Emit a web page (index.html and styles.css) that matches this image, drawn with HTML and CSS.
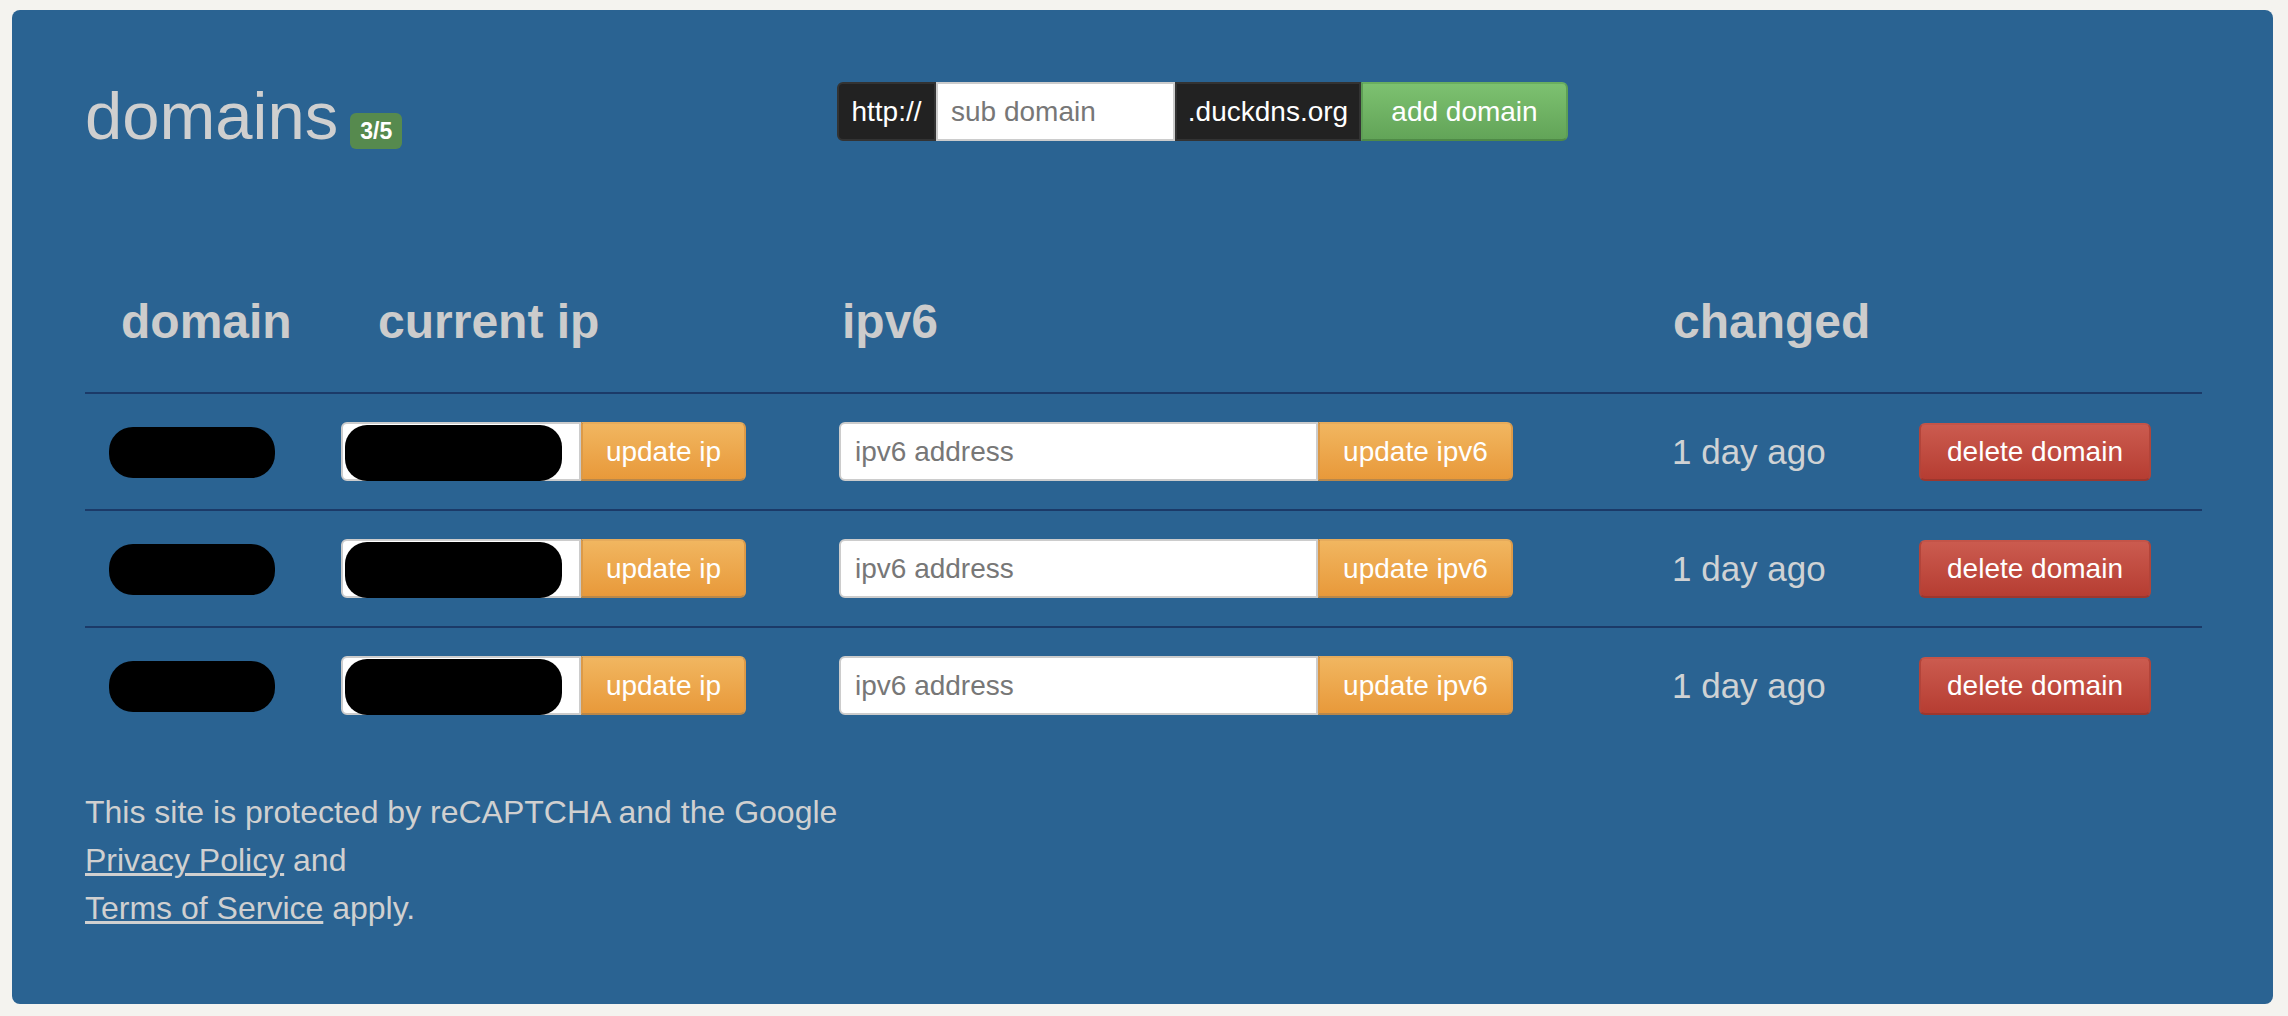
FILE: index.html
```html
<!DOCTYPE html>
<html lang="en">
<head>
<meta charset="utf-8">
<title>Duck DNS - domains</title>
<link rel="stylesheet" href="styles.css">
</head>
<body>
<div class="panel">
  <header class="top">
    <h1 class="title">domains<span class="badge">3/5</span></h1>
    <form class="add-form">
      <span class="addon addon-http">http://</span>
      <input class="field field-sub" type="text" placeholder="sub domain">
      <span class="addon addon-duck">.duckdns.org</span>
      <button class="btn btn-green btn-add" type="button">add domain</button>
    </form>
  </header>

  <table class="domains">
    <colgroup>
      <col class="c-domain">
      <col class="c-ip">
      <col class="c-ipv6">
      <col class="c-changed">
      <col class="c-action">
    </colgroup>
    <thead>
      <tr>
        <th class="h-domain">domain</th>
        <th class="h-ip">current ip</th>
        <th class="h-ipv6">ipv6</th>
        <th class="h-changed">changed</th>
        <th></th>
      </tr>
    </thead>
    <tbody>
      <tr>
        <td><span class="redact redact-domain"></span></td>
        <td>
          <div class="group">
            <div class="field field-ip"><span class="redact redact-ip"></span></div>
            <button class="btn btn-orange btn-ip" type="button">update ip</button>
          </div>
        </td>
        <td>
          <div class="group">
            <input class="field field-v6" type="text" placeholder="ipv6 address">
            <button class="btn btn-orange btn-v6" type="button">update ipv6</button>
          </div>
        </td>
        <td class="changed">1 day ago</td>
        <td><button class="btn btn-red btn-del" type="button">delete domain</button></td>
      </tr>
      <tr>
        <td><span class="redact redact-domain"></span></td>
        <td>
          <div class="group">
            <div class="field field-ip"><span class="redact redact-ip"></span></div>
            <button class="btn btn-orange btn-ip" type="button">update ip</button>
          </div>
        </td>
        <td>
          <div class="group">
            <input class="field field-v6" type="text" placeholder="ipv6 address">
            <button class="btn btn-orange btn-v6" type="button">update ipv6</button>
          </div>
        </td>
        <td class="changed">1 day ago</td>
        <td><button class="btn btn-red btn-del" type="button">delete domain</button></td>
      </tr>
      <tr>
        <td><span class="redact redact-domain"></span></td>
        <td>
          <div class="group">
            <div class="field field-ip"><span class="redact redact-ip"></span></div>
            <button class="btn btn-orange btn-ip" type="button">update ip</button>
          </div>
        </td>
        <td>
          <div class="group">
            <input class="field field-v6" type="text" placeholder="ipv6 address">
            <button class="btn btn-orange btn-v6" type="button">update ipv6</button>
          </div>
        </td>
        <td class="changed">1 day ago</td>
        <td><button class="btn btn-red btn-del" type="button">delete domain</button></td>
      </tr>
    </tbody>
  </table>

  <p class="legal">This site is protected by reCAPTCHA and the Google<br>
    <a href="#">Privacy Policy</a> and<br>
    <a href="#">Terms of Service</a> apply.</p>
</div>
</body>
</html>
```

FILE: styles.css
```css
html, body {
  margin: 0;
}

body {
  background: #f4f3ef;
  padding: 10px 15px 12px 12px;
  font-family: "Liberation Sans", Arial, Helvetica, sans-serif;
}

.panel {
  background: #2a6392;
  border-radius: 8px;
  padding: 69px 71px 72px 73px;
  color: #cfcfcf;
}

/* ---------- top bar ---------- */
.top {
  display: flex;
  align-items: flex-start;
}

.title {
  flex: 0 0 752px;
  margin: 0;
  font-size: 67px;
  line-height: 74px;
  font-weight: normal;
  color: #cfcfcf;
}

.badge {
  display: inline-block;
  margin-left: 12px;
  padding: 7px 10px;
  font-size: 23px;
  line-height: 22px;
  font-weight: bold;
  color: #ffffff;
  background: #568a4e;
  border-radius: 6px;
  vertical-align: baseline;
}

.add-form {
  display: flex;
  height: 59px;
  margin: 3px 0 0;
}

.addon {
  box-sizing: border-box;
  display: flex;
  align-items: center;
  justify-content: center;
  background: #222222;
  border: 2px solid #333333;
  color: #ffffff;
  font-size: 28px;
}

.addon-http {
  width: 99px;
  border-radius: 6px 0 0 6px;
}

.addon-duck {
  width: 186px;
  border-radius: 0;
}

/* ---------- fields ---------- */
.field {
  box-sizing: border-box;
  height: 59px;
  margin: 0;
  background: #ffffff;
  border: 2px solid #cccccc;
  font-family: "Liberation Sans", Arial, Helvetica, sans-serif;
  font-size: 28px;
  color: #555555;
  outline: none;
}

.field::placeholder {
  color: #777777;
}

.field-sub {
  width: 239px;
  padding: 0 13px;
  border-radius: 0;
}

.field-ip {
  width: 240px;
  border-radius: 6px 0 0 6px;
  display: flex;
  align-items: center;
  padding: 0 0 0 2px;
}

.field-v6 {
  width: 479px;
  padding: 0 14px;
  border-radius: 6px 0 0 6px;
}

.redact {
  display: block;
  background: #000000;
}

.redact-domain {
  width: 166px;
  height: 51px;
  border-radius: 24px;
  margin-top: 2px;
}

.redact-ip {
  width: 217px;
  height: 56px;
  border-radius: 22px;
  margin-top: 3px;
}

/* ---------- buttons ---------- */
.btn {
  box-sizing: border-box;
  height: 59px;
  margin: 0;
  padding: 0;
  border: 2px solid;
  font-family: "Liberation Sans", Arial, Helvetica, sans-serif;
  font-size: 28px;
  color: #ffffff;
  cursor: pointer;
}

.btn-green {
  width: 207px;
  border-radius: 0 6px 6px 0;
  background: linear-gradient(#7dc170, #62a458);
  border-color: #6aae5f #5e9f55 #4f8a47 #5e9f55;
}

.btn-orange {
  border-radius: 0 6px 6px 0;
  background: linear-gradient(#f1b660, #e8993a);
  border-color: #e6ab5b #dc9a48 #b8874a #dc9a48;
}

.btn-ip {
  width: 165px;
}

.btn-v6 {
  width: 195px;
}

.btn-red {
  width: 232px;
  height: 58px;
  border-radius: 6px;
  background: linear-gradient(#cb5b4f, #b63d32);
  border-color: #c45448 #b2443a #9c372e #b2443a;
}

/* ---------- table ---------- */
.group {
  display: flex;
}

.domains {
  width: 2117px;
  margin-top: 142px;
  table-layout: fixed;
  border-collapse: separate;
  border-spacing: 0;
}

.c-domain { width: 232px; }
.c-ip { width: 498px; }
.c-ipv6 { width: 833px; }
.c-changed { width: 247px; }
.c-action { width: 307px; }

.domains th {
  text-align: left;
  font-size: 48px;
  line-height: 54px;
  font-weight: bold;
  color: #cccccc;
  padding: 0 0 43px 24px;
  white-space: nowrap;
}

.domains th.h-domain { padding-left: 36px; }
.domains th.h-ip { padding-left: 61px; }
.domains th.h-ipv6 { padding-left: 27px; }
.domains th.h-changed { padding-left: 25px; }

.domains td {
  border-top: 2px solid #1b3a68;
  padding: 28px 0 28px 24px;
  vertical-align: middle;
  height: 59px;
}

.changed {
  font-size: 35px;
  color: #cfd2d4;
  white-space: nowrap;
}

/* ---------- footer ---------- */
.legal {
  margin: 45px 0 0;
  font-size: 32px;
  line-height: 48px;
  color: #d0d0d0;
}

.legal a {
  color: #d0d0d0;
  text-decoration: underline;
}
```
